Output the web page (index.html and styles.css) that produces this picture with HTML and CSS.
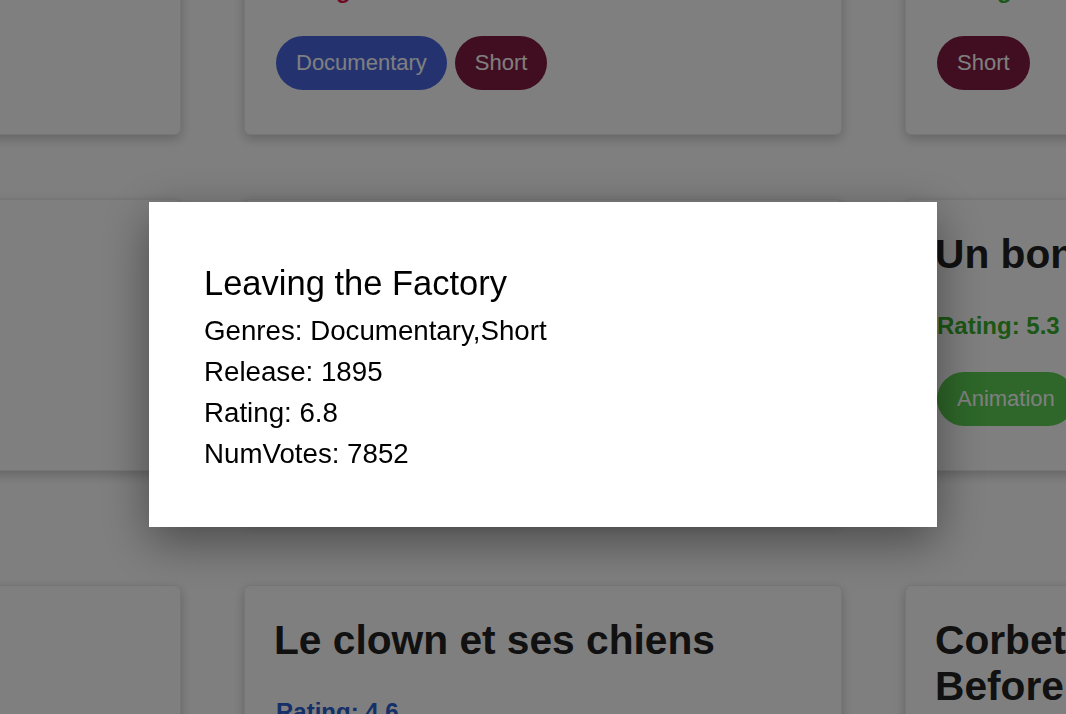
FILE: index.html
```html
<!DOCTYPE html>
<html lang="en">
<head>
<meta charset="utf-8">
<title>Movies</title>
<link rel="stylesheet" href="styles.css">
</head>
<body>
<main class="grid">
  <article class="card">
    <h2 class="card-title">Carmencita</h2>
    <p class="rating rating-green">Rating: 5.7</p>
    <div class="pills"><span class="pill pill-doc">Documentary</span><span class="pill pill-short">Short</span></div>
  </article>
  <article class="card">
    <h2 class="card-title">Pauvre Pierrot</h2>
    <p class="rating rating-red">Rating: 3.9</p>
    <div class="pills"><span class="pill pill-doc">Documentary</span><span class="pill pill-short">Short</span></div>
  </article>
  <article class="card">
    <h2 class="card-title">Blacksmith Scene</h2>
    <p class="rating rating-green">Rating: 6.2</p>
    <div class="pills"><span class="pill pill-short">Short</span></div>
  </article>

  <article class="card">
    <h2 class="card-title">Miss Jerry</h2>
    <p class="rating rating-blue">Rating: 4.5</p>
    <div class="pills"><span class="pill pill-anim">Romance</span></div>
  </article>
  <article class="card card-tall">
    <h2 class="card-title">Leaving the Factory</h2>
    <p class="rating rating-green">Rating: 6.8</p>
    <div class="pills"><span class="pill pill-doc">Documentary</span><span class="pill pill-short">Short</span></div>
  </article>
  <article class="card">
    <h2 class="card-title">Un bon bock</h2>
    <p class="rating rating-green">Rating: 5.3</p>
    <div class="pills"><span class="pill pill-anim">Animation</span><span class="pill pill-short">Short</span></div>
  </article>

  <article class="card">
    <h2 class="card-title">Chinese</h2>
    <p class="rating rating-blue">Rating: 4.8</p>
    <div class="pills"><span class="pill pill-short">Short</span></div>
  </article>
  <article class="card">
    <h2 class="card-title">Le clown et ses chiens</h2>
    <p class="rating rating-blue">Rating: 4.6</p>
    <div class="pills"><span class="pill pill-anim">Animation</span><span class="pill pill-short">Short</span></div>
  </article>
  <article class="card">
    <h2 class="card-title">Corbett and Courtney Before the Kinetograph</h2>
    <p class="rating rating-blue">Rating: 4.4</p>
    <div class="pills"><span class="pill pill-short">Short</span><span class="pill pill-doc">Sport</span></div>
  </article>
</main>

<div class="overlay">
  <div class="modal">
    <h3 class="modal-title">Leaving the Factory</h3>
    <p class="modal-line">Genres: Documentary,Short</p>
    <p class="modal-line">Release: 1895</p>
    <p class="modal-line">Rating: 6.8</p>
    <p class="modal-line">NumVotes: 7852</p>
  </div>
</div>
</body>
</html>
```

FILE: styles.css
```css
html, body {
  margin: 0;
  padding: 0;
  background: #ffffff;
  overflow: hidden;
  width: 1066px;
  height: 714px;
  font-family: "Liberation Sans", Arial, Helvetica, sans-serif;
}

.grid {
  display: grid;
  grid-template-columns: repeat(3, 598px);
  column-gap: 63px;
  row-gap: 64px;
  align-items: start;
  margin-left: -417px;
  margin-top: -137px;
}

.card {
  background: #ffffff;
  border: 1px solid rgba(0, 0, 0, 0.07);
  border-radius: 6px;
  box-shadow: 0 4px 12px rgba(0, 0, 0, 0.22);
  padding: 31px 31px 44px;
}

.card-tall {
  min-height: 245px;
}

.card-title {
  margin: 0 0 35px -2px;
  font-size: 40.7px;
  line-height: 46px;
  font-weight: 700;
  color: #222222;
}

.rating {
  margin: 0 0 32px;
  font-size: 24px;
  line-height: 28px;
  font-weight: 700;
}

.rating-red { color: #e0174c; }
.rating-green { color: #3aae2c; }
.rating-blue { color: #2a5ed0; }

.pills {
  display: flex;
  flex-wrap: wrap;
  gap: 8px;
}

.pill {
  display: inline-block;
  padding: 14px 20px;
  border-radius: 27px;
  font-size: 22px;
  line-height: 26px;
  color: #ffffff;
}

.pill-doc { background: #4866e0; }
.pill-short { background: #821c42; }
.pill-anim { background: #5ccf52; }

.overlay {
  position: fixed;
  inset: 0;
  background: rgba(0, 0, 0, 0.5);
}

.modal {
  position: absolute;
  left: 149px;
  top: 202px;
  width: 788px;
  height: 325px;
  box-sizing: border-box;
  padding: 58px 55px 0;
  background: #ffffff;
  box-shadow: 0 14px 45px rgba(0, 0, 0, 0.42);
  color: #000000;
}

.modal-title {
  margin: 0 0 4px;
  font-size: 34.5px;
  line-height: 46px;
  font-weight: 400;
}

.modal-line {
  margin: 0;
  font-size: 27.7px;
  line-height: 41px;
}
```
